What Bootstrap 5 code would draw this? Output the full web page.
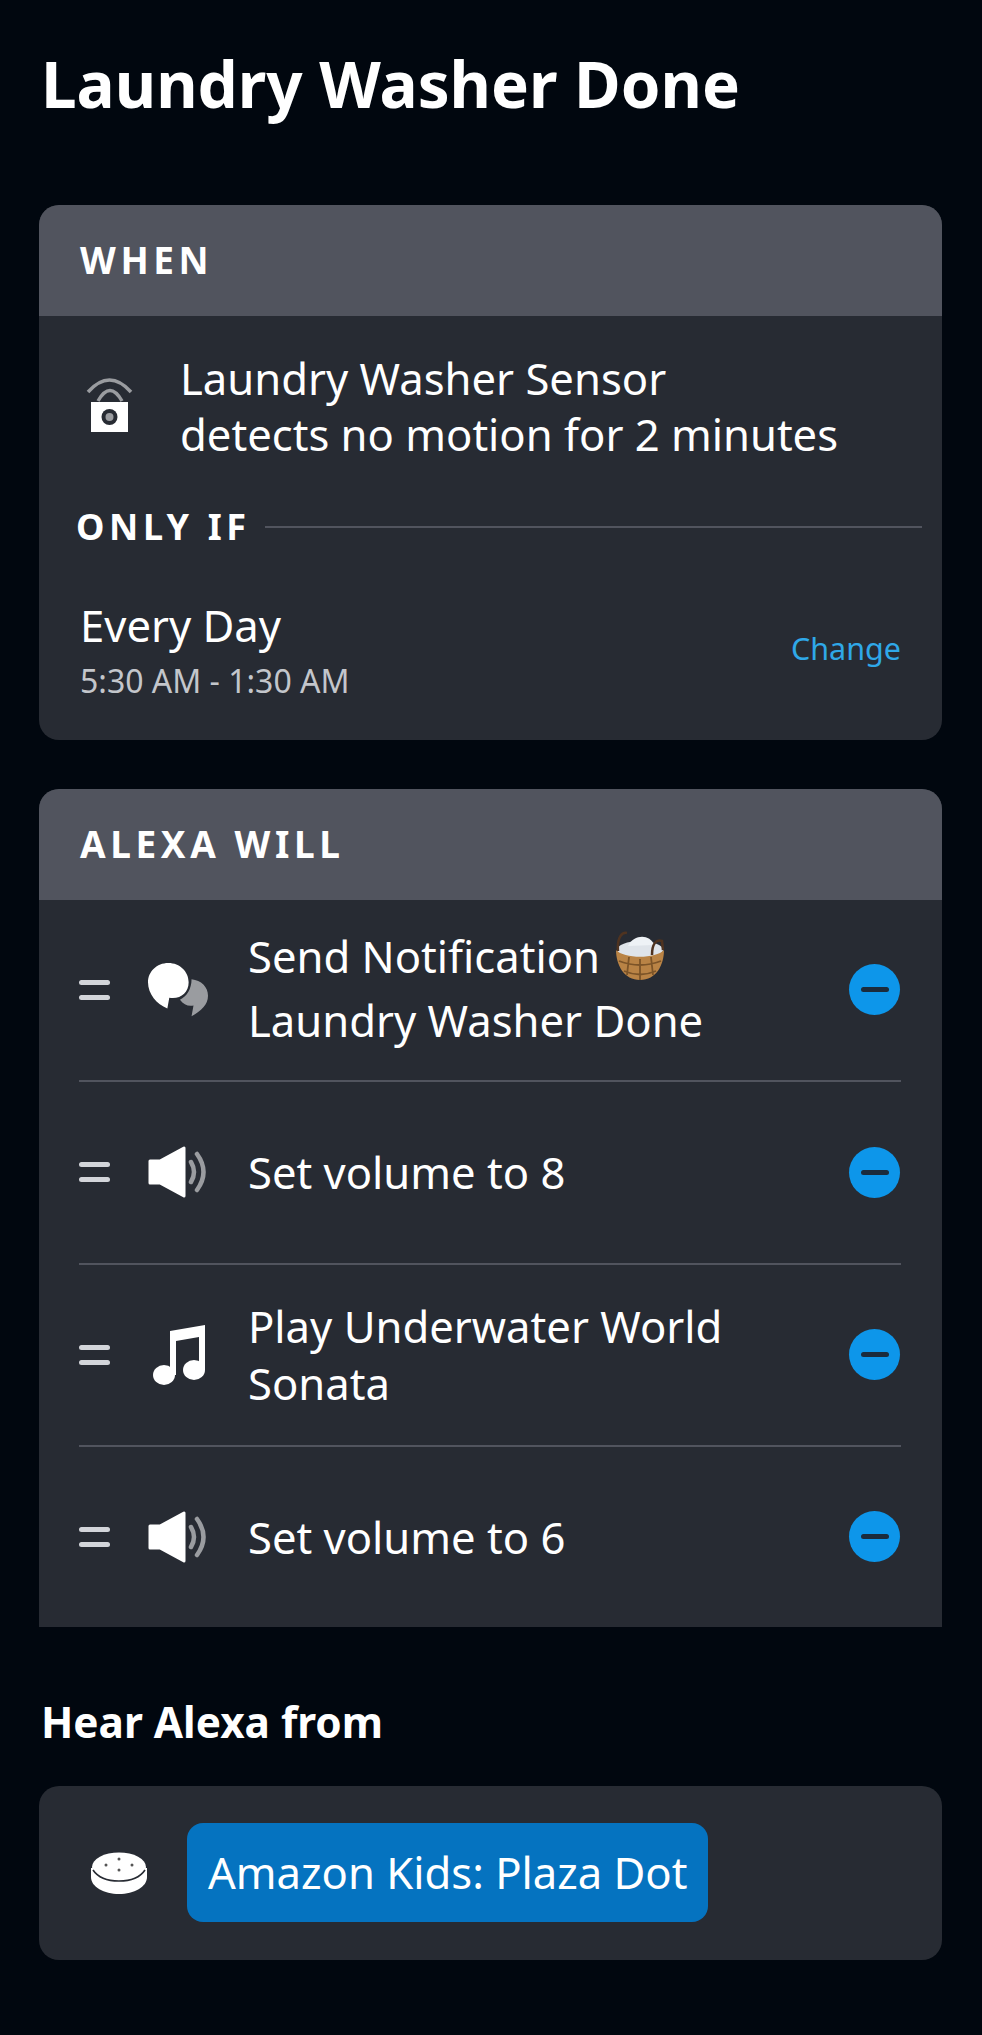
<!DOCTYPE html>
<html lang="en">
<head>
    <meta charset="UTF-8">
    <meta name="viewport" content="width=device-width, initial-scale=1.0">
    <title>Laundry Washer Done</title>
    <link href="https://cdn.jsdelivr.net/npm/bootstrap@5.3.2/dist/css/bootstrap.min.css" rel="stylesheet">
    <style>
        body { background: #01070f; color: #fff; font-family: "Noto Sans", "Open Sans", sans-serif; }
        .page-wrap { width: 982px; height: 2035px; padding: 42px 40px 0 39px; overflow: hidden; }
        .page-title { font-size: 63.7px; font-weight: 700; line-height: 84px; margin: 0 0 78.5px 2px; }
        .panel { background: #272b33; border-radius: 20px; overflow: hidden; }
        .panel-open { border-radius: 20px 20px 0 0; margin-top: 49px; }
        .panel-head { background: #51545e; height: 111px; padding-left: 41px; font-size: 37px; font-weight: 700; letter-spacing: 4.6px; }
        .body-text { font-size: 43.6px; line-height: 56px; }
        .tight-text { line-height: 57px; }
        .sensor-row { padding: 34px 0 0 41px; }
        .sensor-icon { width: 58px; margin-right: 42px; flex: none; }
        .only-if { padding: 40px 20px 0 37px; font-size: 36px; font-weight: 700; letter-spacing: 4.6px; line-height: 50px; }
        .only-if i { flex: 1; height: 2px; background: #51545e; margin-left: 14px; }
        .schedule { padding: 45px 41px 39px 41px; }
        .schedule-time { font-size: 32px; color: #c3c6cb; line-height: 40px; margin-top: 8px; }
        .change-link { color: #2fa8e8; font-size: 30.5px; text-decoration: none; }
        .action-row { height: 182.5px; margin: 0 41px 0 40px; border-bottom: 2px solid #51545e; }
        .action-row:last-child { border-bottom: 0; height: 179.5px; }
        .grip { width: 31px; margin-right: 38px; flex: none; }
        .grip i { display: block; height: 5px; border-radius: 3px; background: #d3d5da; margin: 10px 0; }
        .act-icon { width: 60px; margin-right: 40px; flex: none; }
        .tall-line { height: 71px; gap: 14px; }
        .notify-text { margin-bottom: 11px; }
        .remove-dot { width: 51px; height: 51px; border-radius: 50%; background: #0d96ea; flex: none; margin-right: 1px; }
        .remove-dot i { width: 28px; height: 5px; border-radius: 3px; background: #1b2b3c; }
        .sub-title { font-size: 42.3px; font-weight: 700; line-height: 56px; margin: 67px 0 36px 2px; }
        .device-panel { height: 174px; padding-left: 52px; }
        .device-chip { background: #0573c0; color: #fff; height: 99px; border: 0; border-radius: 16px; font-size: 43.6px; padding: 0 21px; margin-left: 40px; }
    </style>
</head>
<body>
    <div class="page-wrap">
        <h1 class="page-title">Laundry Washer Done</h1>

        <div class="panel">
            <div class="panel-head d-flex align-items-center">WHEN</div>
            <div class="sensor-row d-flex align-items-center">
                <svg class="sensor-icon" viewBox="0 0 58 56" height="56">
                    <path d="M8 14Q29.5 -10 51 14M18 23Q30 2 42 23" fill="none" stroke="#9a9ca0" stroke-width="3.5"/>
                    <rect x="11" y="24" width="37" height="30" fill="#fff"/>
                    <circle cx="29.5" cy="39" r="8" fill="#272b33"/>
                    <circle cx="29.5" cy="39" r="4" fill="#9a9ca0"/>
                </svg>
                <div class="body-text">Laundry Washer Sensor<br>detects no motion for 2 minutes</div>
            </div>
            <div class="only-if d-flex align-items-center">ONLY IF<i></i></div>
            <div class="schedule d-flex align-items-center justify-content-between">
                <div>
                    <div class="body-text">Every Day</div>
                    <div class="schedule-time">5:30 AM - 1:30 AM</div>
                </div>
                <a href="#" class="change-link">Change</a>
            </div>
        </div>

        <div class="panel panel-open">
            <div class="panel-head d-flex align-items-center">ALEXA WILL</div>
            <div class="action-row d-flex align-items-center">
                <div class="grip"><i></i><i></i></div>
                <svg class="act-icon" viewBox="0 0 62 56" height="56">
                    <path d="M45 17C55 18 62 25 62 34C62 43 55 50 45 55L47 44C41 45 37 43 33 38C40 35 45 27 45 17Z" fill="#9a9ca0"/>
                    <path d="M21 0C33 0 42 9 42 20C42 31 33 38 22 36L20 47C9 43 0 32 0 20C0 9 9 0 21 0Z" fill="#fff"/>
                </svg>
                <div class="flex-grow-1 body-text notify-text">
                    <div class="tall-line d-flex align-items-center">Send Notification
                        <svg viewBox="0 0 52 50" width="52" height="50">
                            <ellipse cx="26" cy="19" rx="23" ry="9" fill="#dfe4ea"/>
                            <path d="M14 15C20 3 36 3 40 14Z" fill="#eef2f6"/>
                            <path d="M2 19C10 28 42 28 50 19C50 34 42 49 26 49C10 49 2 34 2 19Z" fill="#b98345"/>
                            <path d="M5 30Q26 38 47 30M10 40Q26 47 42 40M15 26L13 44M26 28V49M37 26L39 44" stroke="#7c5428" stroke-width="1.8" fill="none"/>
                            <path d="M4 20C3 6 8 1 13 2M38 24C38 13 42 8 48 10L49 19" fill="none" stroke="#4f3320" stroke-width="2.5"/>
                        </svg>
                    </div>
                    <div>Laundry Washer Done</div>
                </div>
                <div class="remove-dot d-flex align-items-center justify-content-center"><i></i></div>
            </div>
            <div class="action-row d-flex align-items-center">
                <div class="grip"><i></i><i></i></div>
                <svg class="act-icon" viewBox="0 0 60 52" height="52">
                    <path d="M2 15H12L36 2V50L12 37H2Z" fill="#fff" stroke="#fff" stroke-width="3" stroke-linejoin="round"/>
                    <path d="M43 16Q49 26 43 36M49 8Q62 26 49 44" fill="none" stroke="#9a9ca0" stroke-width="4.5" stroke-linecap="round"/>
                </svg>
                <div class="body-text flex-grow-1">Set volume to 8</div>
                <div class="remove-dot d-flex align-items-center justify-content-center"><i></i></div>
            </div>
            <div class="action-row d-flex align-items-center">
                <div class="grip"><i></i><i></i></div>
                <svg class="act-icon" viewBox="-5 0 60 62" height="62">
                    <path d="M17 7L52 1V46H46V13L23 17V51H17Z" fill="#fff"/>
                    <ellipse cx="11" cy="51" rx="11" ry="10" fill="#fff"/>
                    <ellipse cx="41" cy="46" rx="11" ry="10" fill="#fff"/>
                </svg>
                <div class="body-text tight-text flex-grow-1">Play Underwater World<br>Sonata</div>
                <div class="remove-dot d-flex align-items-center justify-content-center"><i></i></div>
            </div>
            <div class="action-row d-flex align-items-center">
                <div class="grip"><i></i><i></i></div>
                <svg class="act-icon" viewBox="0 0 60 52" height="52">
                    <path d="M2 15H12L36 2V50L12 37H2Z" fill="#fff" stroke="#fff" stroke-width="3" stroke-linejoin="round"/>
                    <path d="M43 16Q49 26 43 36M49 8Q62 26 49 44" fill="none" stroke="#9a9ca0" stroke-width="4.5" stroke-linecap="round"/>
                </svg>
                <div class="body-text flex-grow-1">Set volume to 6</div>
                <div class="remove-dot d-flex align-items-center justify-content-center"><i></i></div>
            </div>
        </div>

        <div class="sub-title">Hear Alexa from</div>
        <div class="panel device-panel d-flex align-items-center">
            <svg viewBox="0 0 56 42" width="56" height="42">
                <path d="M0 16V25C0 35 13 42 28 42C43 42 56 35 56 25V16Z" fill="#fff"/>
                <ellipse cx="28" cy="15" rx="27" ry="14.5" fill="#fff"/>
                <path d="M2 18C8 27 20 29 28 29C36 29 48 27 54 18" fill="none" stroke="#272b33" stroke-width="1.6"/>
                <circle cx="28" cy="7" r="1.5" fill="#555"/><circle cx="15" cy="13" r="1.5" fill="#555"/>
                <circle cx="41" cy="13" r="1.5" fill="#555"/><circle cx="28" cy="18" r="1.5" fill="#555"/>
            </svg>
            <button class="device-chip">Amazon Kids: Plaza Dot</button>
        </div>
    </div>
    <script src="https://cdn.jsdelivr.net/npm/bootstrap@5.3.2/dist/js/bootstrap.bundle.min.js"></script>
</body>
</html>
